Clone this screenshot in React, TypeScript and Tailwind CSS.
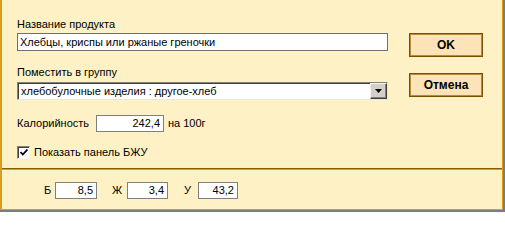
const font = { fontFamily: '"Liberation Sans", Arial, sans-serif' };

function NumBox({ value, width }: { value: string; width: string }) {
  return (
    <div
      className={`${width} h-[17px] bg-white border border-[#7f7f7f] text-right pr-[3px] leading-[15px] text-[11px] text-black`}
    >
      {value}
    </div>
  );
}

export default function App() {
  return (
    <div className="w-[505px] h-[212px] border-r-2 border-b-2 border-[#7c7c7c]" style={font}>
      <div className="h-full border-l-2 border-r border-b border-[#dc9c1c] bg-[#fdf1c5] flex flex-col text-[11px] text-black">
        {/* Upper panel */}
        <div className="h-[168px] flex">
          <div className="w-[386px] pl-[15px] pt-[18px] flex flex-col">
            <div className="h-[13px] leading-[13px]">Название продукта</div>
            <div className="mt-[2px] h-[18px] bg-white border border-[#6f6f6f] pl-[2px] leading-[16px]">
              Хлебцы, криспы или ржаные греночки
            </div>

            <div className="mt-[15px] h-[13px] leading-[13px]">Поместить в группу</div>
            <div className="mt-[3px] h-[18px] flex bg-white border border-t-[#808080] border-l-[#808080] border-b-[#e6e6e6] border-r-[#e6e6e6] shadow-[inset_1px_1px_0_#404040]">
              <div className="flex-1 pl-[3px] leading-[16px]">хлебобулочные изделия : другое-хлеб</div>
              <div className="w-[17px] h-[16px] flex items-center justify-center bg-[#d4d0c8] border border-t-[#f4f4f4] border-l-[#f4f4f4] border-b-[#404040] border-r-[#404040] shadow-[inset_-1px_-1px_0_#808080]">
                <svg width="7" height="4" viewBox="0 0 7 4">
                  <path d="M0 0h7L3.5 4z" fill="#000" />
                </svg>
              </div>
            </div>

            <div className="mt-[15px] flex items-center">
              <span className="w-[79px] leading-[13px]">Калорийность</span>
              <NumBox value="242,4" width="w-[68px]" />
              <span className="ml-[4px] leading-[13px]">на 100г</span>
            </div>

            <div className="mt-[14px] flex items-center">
              <div className="w-[13px] h-[13px] bg-white border border-t-[#808080] border-l-[#808080] border-b-[#f4f4f4] border-r-[#f4f4f4] shadow-[inset_1px_1px_0_#404040] flex items-center justify-center">
                <svg width="8" height="7" viewBox="0 0 8 7">
                  <path d="M0.5 3l2.3 2.5L7.5 0.5" stroke="#000" strokeWidth="1.8" fill="none" />
                </svg>
              </div>
              <span className="ml-[4px] leading-[13px]">Показать панель БЖУ</span>
            </div>
          </div>

          <div className="ml-[21px] pt-[33px] flex flex-col gap-[16px]">
            <button className="w-[74px] h-[24px] bg-[#fde4b8] border border-[#7a5000] shadow-[inset_0_0_0_1px_#b98a3a] font-bold text-[12px]">
              OK
            </button>
            <button className="w-[74px] h-[24px] bg-[#fde4b8] border border-[#7a5000] shadow-[inset_0_0_0_1px_#b98a3a] font-bold text-[12px]">
              Отмена
            </button>
          </div>
        </div>

        {/* Divider */}
        <div className="h-px bg-[#8a5c00]" />
        <div className="h-px bg-[#e69c12]" />

        {/* Bottom panel */}
        <div className="flex-1 pt-[12px] pl-[42px] flex items-start">
          <div className="flex items-center">
            <span className="w-[11px] leading-[17px]">Б</span>
            <NumBox value="8,5" width="w-[42px]" />
          </div>
          <div className="ml-[15px] flex items-center">
            <span className="w-[15px] leading-[17px]">Ж</span>
            <NumBox value="3,4" width="w-[41px]" />
          </div>
          <div className="ml-[16px] flex items-center">
            <span className="w-[14px] leading-[17px]">У</span>
            <NumBox value="43,2" width="w-[40px]" />
          </div>
        </div>
      </div>
    </div>
  );
}
